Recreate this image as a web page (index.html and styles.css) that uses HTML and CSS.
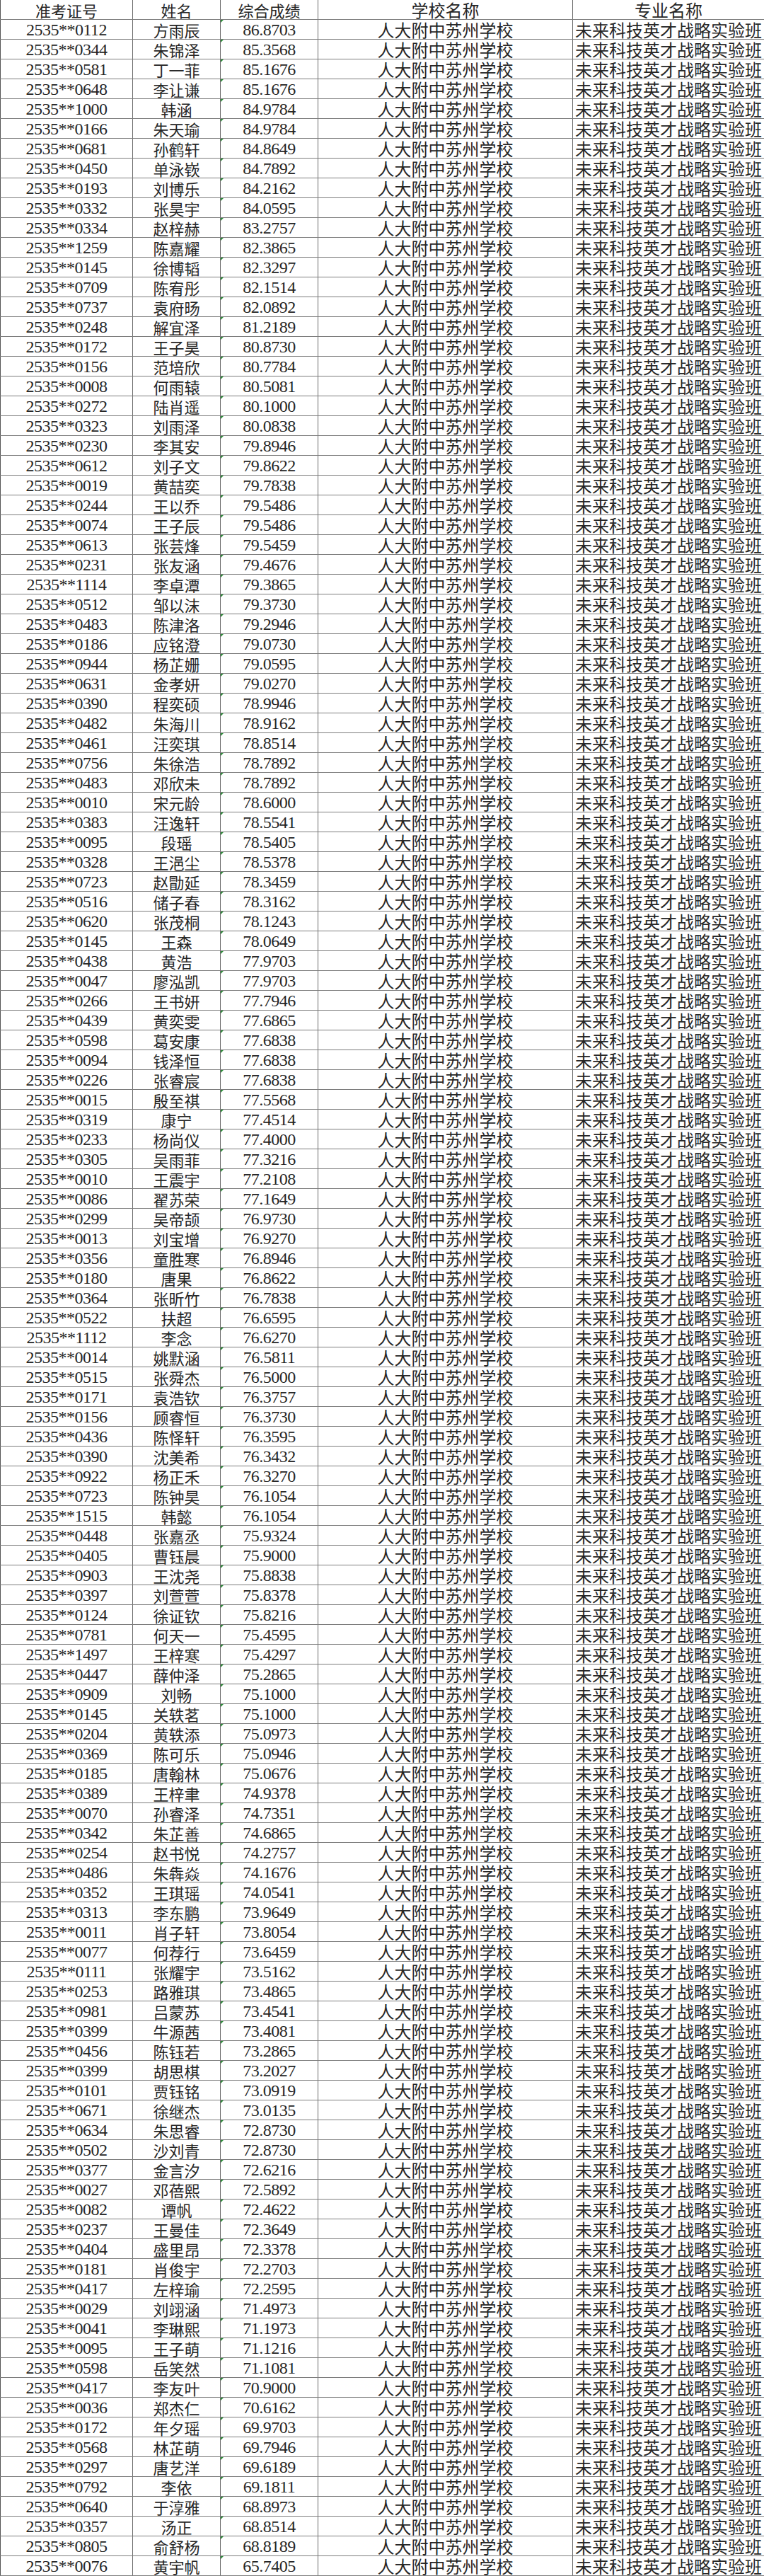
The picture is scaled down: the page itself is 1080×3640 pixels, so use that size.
FILE: index.html
```html
<!DOCTYPE html>
<html lang="zh-CN">
<head>
<meta charset="utf-8">
<title>录取名单</title>
<link rel="stylesheet" href="styles.css">
</head>
<body>
<div class="sheet">
<div class="row head"><span class="c t">准考证号</span><span class="c t">姓名</span><span class="c t">综合成绩</span><span class="c t">学校名称</span><span class="c t">专业名称</span></div>
<div class="row"><span class="c n">2535**0112</span><span class="c t">方雨辰</span><span class="c n s">86.8703</span><span class="c t">人大附中苏州学校</span><span class="c t">未来科技英才战略实验班</span></div>
<div class="row"><span class="c n">2535**0344</span><span class="c t">朱锦泽</span><span class="c n s">85.3568</span><span class="c t">人大附中苏州学校</span><span class="c t">未来科技英才战略实验班</span></div>
<div class="row"><span class="c n">2535**0581</span><span class="c t">丁一菲</span><span class="c n s">85.1676</span><span class="c t">人大附中苏州学校</span><span class="c t">未来科技英才战略实验班</span></div>
<div class="row"><span class="c n">2535**0648</span><span class="c t">李让谦</span><span class="c n s">85.1676</span><span class="c t">人大附中苏州学校</span><span class="c t">未来科技英才战略实验班</span></div>
<div class="row"><span class="c n">2535**1000</span><span class="c t">韩涵</span><span class="c n s">84.9784</span><span class="c t">人大附中苏州学校</span><span class="c t">未来科技英才战略实验班</span></div>
<div class="row"><span class="c n">2535**0166</span><span class="c t">朱天瑜</span><span class="c n s">84.9784</span><span class="c t">人大附中苏州学校</span><span class="c t">未来科技英才战略实验班</span></div>
<div class="row"><span class="c n">2535**0681</span><span class="c t">孙鹤轩</span><span class="c n s">84.8649</span><span class="c t">人大附中苏州学校</span><span class="c t">未来科技英才战略实验班</span></div>
<div class="row"><span class="c n">2535**0450</span><span class="c t">单泳嵚</span><span class="c n s">84.7892</span><span class="c t">人大附中苏州学校</span><span class="c t">未来科技英才战略实验班</span></div>
<div class="row"><span class="c n">2535**0193</span><span class="c t">刘博乐</span><span class="c n s">84.2162</span><span class="c t">人大附中苏州学校</span><span class="c t">未来科技英才战略实验班</span></div>
<div class="row"><span class="c n">2535**0332</span><span class="c t">张昊宇</span><span class="c n s">84.0595</span><span class="c t">人大附中苏州学校</span><span class="c t">未来科技英才战略实验班</span></div>
<div class="row"><span class="c n">2535**0334</span><span class="c t">赵梓赫</span><span class="c n s">83.2757</span><span class="c t">人大附中苏州学校</span><span class="c t">未来科技英才战略实验班</span></div>
<div class="row"><span class="c n">2535**1259</span><span class="c t">陈嘉耀</span><span class="c n s">82.3865</span><span class="c t">人大附中苏州学校</span><span class="c t">未来科技英才战略实验班</span></div>
<div class="row"><span class="c n">2535**0145</span><span class="c t">徐博韬</span><span class="c n s">82.3297</span><span class="c t">人大附中苏州学校</span><span class="c t">未来科技英才战略实验班</span></div>
<div class="row"><span class="c n">2535**0709</span><span class="c t">陈宥彤</span><span class="c n s">82.1514</span><span class="c t">人大附中苏州学校</span><span class="c t">未来科技英才战略实验班</span></div>
<div class="row"><span class="c n">2535**0737</span><span class="c t">袁府旸</span><span class="c n s">82.0892</span><span class="c t">人大附中苏州学校</span><span class="c t">未来科技英才战略实验班</span></div>
<div class="row"><span class="c n">2535**0248</span><span class="c t">解宜泽</span><span class="c n s">81.2189</span><span class="c t">人大附中苏州学校</span><span class="c t">未来科技英才战略实验班</span></div>
<div class="row"><span class="c n">2535**0172</span><span class="c t">王子昊</span><span class="c n s">80.8730</span><span class="c t">人大附中苏州学校</span><span class="c t">未来科技英才战略实验班</span></div>
<div class="row"><span class="c n">2535**0156</span><span class="c t">范培欣</span><span class="c n s">80.7784</span><span class="c t">人大附中苏州学校</span><span class="c t">未来科技英才战略实验班</span></div>
<div class="row"><span class="c n">2535**0008</span><span class="c t">何雨辕</span><span class="c n s">80.5081</span><span class="c t">人大附中苏州学校</span><span class="c t">未来科技英才战略实验班</span></div>
<div class="row"><span class="c n">2535**0272</span><span class="c t">陆肖遥</span><span class="c n s">80.1000</span><span class="c t">人大附中苏州学校</span><span class="c t">未来科技英才战略实验班</span></div>
<div class="row"><span class="c n">2535**0323</span><span class="c t">刘雨泽</span><span class="c n s">80.0838</span><span class="c t">人大附中苏州学校</span><span class="c t">未来科技英才战略实验班</span></div>
<div class="row"><span class="c n">2535**0230</span><span class="c t">李其安</span><span class="c n s">79.8946</span><span class="c t">人大附中苏州学校</span><span class="c t">未来科技英才战略实验班</span></div>
<div class="row"><span class="c n">2535**0612</span><span class="c t">刘子文</span><span class="c n s">79.8622</span><span class="c t">人大附中苏州学校</span><span class="c t">未来科技英才战略实验班</span></div>
<div class="row"><span class="c n">2535**0019</span><span class="c t">黄喆奕</span><span class="c n s">79.7838</span><span class="c t">人大附中苏州学校</span><span class="c t">未来科技英才战略实验班</span></div>
<div class="row"><span class="c n">2535**0244</span><span class="c t">王以乔</span><span class="c n s">79.5486</span><span class="c t">人大附中苏州学校</span><span class="c t">未来科技英才战略实验班</span></div>
<div class="row"><span class="c n">2535**0074</span><span class="c t">王子辰</span><span class="c n s">79.5486</span><span class="c t">人大附中苏州学校</span><span class="c t">未来科技英才战略实验班</span></div>
<div class="row"><span class="c n">2535**0613</span><span class="c t">张芸烽</span><span class="c n s">79.5459</span><span class="c t">人大附中苏州学校</span><span class="c t">未来科技英才战略实验班</span></div>
<div class="row"><span class="c n">2535**0231</span><span class="c t">张友涵</span><span class="c n s">79.4676</span><span class="c t">人大附中苏州学校</span><span class="c t">未来科技英才战略实验班</span></div>
<div class="row"><span class="c n">2535**1114</span><span class="c t">李卓潭</span><span class="c n s">79.3865</span><span class="c t">人大附中苏州学校</span><span class="c t">未来科技英才战略实验班</span></div>
<div class="row"><span class="c n">2535**0512</span><span class="c t">邹以沫</span><span class="c n s">79.3730</span><span class="c t">人大附中苏州学校</span><span class="c t">未来科技英才战略实验班</span></div>
<div class="row"><span class="c n">2535**0483</span><span class="c t">陈津洛</span><span class="c n s">79.2946</span><span class="c t">人大附中苏州学校</span><span class="c t">未来科技英才战略实验班</span></div>
<div class="row"><span class="c n">2535**0186</span><span class="c t">应铭澄</span><span class="c n s">79.0730</span><span class="c t">人大附中苏州学校</span><span class="c t">未来科技英才战略实验班</span></div>
<div class="row"><span class="c n">2535**0944</span><span class="c t">杨芷姗</span><span class="c n s">79.0595</span><span class="c t">人大附中苏州学校</span><span class="c t">未来科技英才战略实验班</span></div>
<div class="row"><span class="c n">2535**0631</span><span class="c t">金孝妍</span><span class="c n s">79.0270</span><span class="c t">人大附中苏州学校</span><span class="c t">未来科技英才战略实验班</span></div>
<div class="row"><span class="c n">2535**0390</span><span class="c t">程奕硕</span><span class="c n s">78.9946</span><span class="c t">人大附中苏州学校</span><span class="c t">未来科技英才战略实验班</span></div>
<div class="row"><span class="c n">2535**0482</span><span class="c t">朱海川</span><span class="c n s">78.9162</span><span class="c t">人大附中苏州学校</span><span class="c t">未来科技英才战略实验班</span></div>
<div class="row"><span class="c n">2535**0461</span><span class="c t">汪奕琪</span><span class="c n s">78.8514</span><span class="c t">人大附中苏州学校</span><span class="c t">未来科技英才战略实验班</span></div>
<div class="row"><span class="c n">2535**0756</span><span class="c t">朱徐浩</span><span class="c n s">78.7892</span><span class="c t">人大附中苏州学校</span><span class="c t">未来科技英才战略实验班</span></div>
<div class="row"><span class="c n">2535**0483</span><span class="c t">邓欣未</span><span class="c n s">78.7892</span><span class="c t">人大附中苏州学校</span><span class="c t">未来科技英才战略实验班</span></div>
<div class="row"><span class="c n">2535**0010</span><span class="c t">宋元龄</span><span class="c n s">78.6000</span><span class="c t">人大附中苏州学校</span><span class="c t">未来科技英才战略实验班</span></div>
<div class="row"><span class="c n">2535**0383</span><span class="c t">汪逸轩</span><span class="c n s">78.5541</span><span class="c t">人大附中苏州学校</span><span class="c t">未来科技英才战略实验班</span></div>
<div class="row"><span class="c n">2535**0095</span><span class="c t">段瑶</span><span class="c n s">78.5405</span><span class="c t">人大附中苏州学校</span><span class="c t">未来科技英才战略实验班</span></div>
<div class="row"><span class="c n">2535**0328</span><span class="c t">王浥尘</span><span class="c n s">78.5378</span><span class="c t">人大附中苏州学校</span><span class="c t">未来科技英才战略实验班</span></div>
<div class="row"><span class="c n">2535**0723</span><span class="c t">赵勖延</span><span class="c n s">78.3459</span><span class="c t">人大附中苏州学校</span><span class="c t">未来科技英才战略实验班</span></div>
<div class="row"><span class="c n">2535**0516</span><span class="c t">储子春</span><span class="c n s">78.3162</span><span class="c t">人大附中苏州学校</span><span class="c t">未来科技英才战略实验班</span></div>
<div class="row"><span class="c n">2535**0620</span><span class="c t">张茂桐</span><span class="c n s">78.1243</span><span class="c t">人大附中苏州学校</span><span class="c t">未来科技英才战略实验班</span></div>
<div class="row"><span class="c n">2535**0145</span><span class="c t">王森</span><span class="c n s">78.0649</span><span class="c t">人大附中苏州学校</span><span class="c t">未来科技英才战略实验班</span></div>
<div class="row"><span class="c n">2535**0438</span><span class="c t">黄浩</span><span class="c n s">77.9703</span><span class="c t">人大附中苏州学校</span><span class="c t">未来科技英才战略实验班</span></div>
<div class="row"><span class="c n">2535**0047</span><span class="c t">廖泓凯</span><span class="c n s">77.9703</span><span class="c t">人大附中苏州学校</span><span class="c t">未来科技英才战略实验班</span></div>
<div class="row"><span class="c n">2535**0266</span><span class="c t">王书妍</span><span class="c n s">77.7946</span><span class="c t">人大附中苏州学校</span><span class="c t">未来科技英才战略实验班</span></div>
<div class="row"><span class="c n">2535**0439</span><span class="c t">黄奕雯</span><span class="c n s">77.6865</span><span class="c t">人大附中苏州学校</span><span class="c t">未来科技英才战略实验班</span></div>
<div class="row"><span class="c n">2535**0598</span><span class="c t">葛安康</span><span class="c n s">77.6838</span><span class="c t">人大附中苏州学校</span><span class="c t">未来科技英才战略实验班</span></div>
<div class="row"><span class="c n">2535**0094</span><span class="c t">钱泽恒</span><span class="c n s">77.6838</span><span class="c t">人大附中苏州学校</span><span class="c t">未来科技英才战略实验班</span></div>
<div class="row"><span class="c n">2535**0226</span><span class="c t">张睿宸</span><span class="c n s">77.6838</span><span class="c t">人大附中苏州学校</span><span class="c t">未来科技英才战略实验班</span></div>
<div class="row"><span class="c n">2535**0015</span><span class="c t">殷至祺</span><span class="c n s">77.5568</span><span class="c t">人大附中苏州学校</span><span class="c t">未来科技英才战略实验班</span></div>
<div class="row"><span class="c n">2535**0319</span><span class="c t">康宁</span><span class="c n s">77.4514</span><span class="c t">人大附中苏州学校</span><span class="c t">未来科技英才战略实验班</span></div>
<div class="row"><span class="c n">2535**0233</span><span class="c t">杨尚仪</span><span class="c n s">77.4000</span><span class="c t">人大附中苏州学校</span><span class="c t">未来科技英才战略实验班</span></div>
<div class="row"><span class="c n">2535**0305</span><span class="c t">吴雨菲</span><span class="c n s">77.3216</span><span class="c t">人大附中苏州学校</span><span class="c t">未来科技英才战略实验班</span></div>
<div class="row"><span class="c n">2535**0010</span><span class="c t">王震宇</span><span class="c n s">77.2108</span><span class="c t">人大附中苏州学校</span><span class="c t">未来科技英才战略实验班</span></div>
<div class="row"><span class="c n">2535**0086</span><span class="c t">翟苏荣</span><span class="c n s">77.1649</span><span class="c t">人大附中苏州学校</span><span class="c t">未来科技英才战略实验班</span></div>
<div class="row"><span class="c n">2535**0299</span><span class="c t">吴帝颉</span><span class="c n s">76.9730</span><span class="c t">人大附中苏州学校</span><span class="c t">未来科技英才战略实验班</span></div>
<div class="row"><span class="c n">2535**0013</span><span class="c t">刘宝增</span><span class="c n s">76.9270</span><span class="c t">人大附中苏州学校</span><span class="c t">未来科技英才战略实验班</span></div>
<div class="row"><span class="c n">2535**0356</span><span class="c t">童胜寒</span><span class="c n s">76.8946</span><span class="c t">人大附中苏州学校</span><span class="c t">未来科技英才战略实验班</span></div>
<div class="row"><span class="c n">2535**0180</span><span class="c t">唐果</span><span class="c n s">76.8622</span><span class="c t">人大附中苏州学校</span><span class="c t">未来科技英才战略实验班</span></div>
<div class="row"><span class="c n">2535**0364</span><span class="c t">张昕竹</span><span class="c n s">76.7838</span><span class="c t">人大附中苏州学校</span><span class="c t">未来科技英才战略实验班</span></div>
<div class="row"><span class="c n">2535**0522</span><span class="c t">扶超</span><span class="c n s">76.6595</span><span class="c t">人大附中苏州学校</span><span class="c t">未来科技英才战略实验班</span></div>
<div class="row"><span class="c n">2535**1112</span><span class="c t">李念</span><span class="c n s">76.6270</span><span class="c t">人大附中苏州学校</span><span class="c t">未来科技英才战略实验班</span></div>
<div class="row"><span class="c n">2535**0014</span><span class="c t">姚默涵</span><span class="c n s">76.5811</span><span class="c t">人大附中苏州学校</span><span class="c t">未来科技英才战略实验班</span></div>
<div class="row"><span class="c n">2535**0515</span><span class="c t">张舜杰</span><span class="c n s">76.5000</span><span class="c t">人大附中苏州学校</span><span class="c t">未来科技英才战略实验班</span></div>
<div class="row"><span class="c n">2535**0171</span><span class="c t">袁浩钦</span><span class="c n s">76.3757</span><span class="c t">人大附中苏州学校</span><span class="c t">未来科技英才战略实验班</span></div>
<div class="row"><span class="c n">2535**0156</span><span class="c t">顾睿恒</span><span class="c n s">76.3730</span><span class="c t">人大附中苏州学校</span><span class="c t">未来科技英才战略实验班</span></div>
<div class="row"><span class="c n">2535**0436</span><span class="c t">陈怿轩</span><span class="c n s">76.3595</span><span class="c t">人大附中苏州学校</span><span class="c t">未来科技英才战略实验班</span></div>
<div class="row"><span class="c n">2535**0390</span><span class="c t">沈美希</span><span class="c n s">76.3432</span><span class="c t">人大附中苏州学校</span><span class="c t">未来科技英才战略实验班</span></div>
<div class="row"><span class="c n">2535**0922</span><span class="c t">杨正禾</span><span class="c n s">76.3270</span><span class="c t">人大附中苏州学校</span><span class="c t">未来科技英才战略实验班</span></div>
<div class="row"><span class="c n">2535**0723</span><span class="c t">陈钟昊</span><span class="c n s">76.1054</span><span class="c t">人大附中苏州学校</span><span class="c t">未来科技英才战略实验班</span></div>
<div class="row"><span class="c n">2535**1515</span><span class="c t">韩懿</span><span class="c n s">76.1054</span><span class="c t">人大附中苏州学校</span><span class="c t">未来科技英才战略实验班</span></div>
<div class="row"><span class="c n">2535**0448</span><span class="c t">张嘉丞</span><span class="c n s">75.9324</span><span class="c t">人大附中苏州学校</span><span class="c t">未来科技英才战略实验班</span></div>
<div class="row"><span class="c n">2535**0405</span><span class="c t">曹钰晨</span><span class="c n s">75.9000</span><span class="c t">人大附中苏州学校</span><span class="c t">未来科技英才战略实验班</span></div>
<div class="row"><span class="c n">2535**0903</span><span class="c t">王沈尧</span><span class="c n s">75.8838</span><span class="c t">人大附中苏州学校</span><span class="c t">未来科技英才战略实验班</span></div>
<div class="row"><span class="c n">2535**0397</span><span class="c t">刘萱萱</span><span class="c n s">75.8378</span><span class="c t">人大附中苏州学校</span><span class="c t">未来科技英才战略实验班</span></div>
<div class="row"><span class="c n">2535**0124</span><span class="c t">徐证钦</span><span class="c n s">75.8216</span><span class="c t">人大附中苏州学校</span><span class="c t">未来科技英才战略实验班</span></div>
<div class="row"><span class="c n">2535**0781</span><span class="c t">何天一</span><span class="c n s">75.4595</span><span class="c t">人大附中苏州学校</span><span class="c t">未来科技英才战略实验班</span></div>
<div class="row"><span class="c n">2535**1497</span><span class="c t">王梓寒</span><span class="c n s">75.4297</span><span class="c t">人大附中苏州学校</span><span class="c t">未来科技英才战略实验班</span></div>
<div class="row"><span class="c n">2535**0447</span><span class="c t">薛仲泽</span><span class="c n s">75.2865</span><span class="c t">人大附中苏州学校</span><span class="c t">未来科技英才战略实验班</span></div>
<div class="row"><span class="c n">2535**0909</span><span class="c t">刘畅</span><span class="c n s">75.1000</span><span class="c t">人大附中苏州学校</span><span class="c t">未来科技英才战略实验班</span></div>
<div class="row"><span class="c n">2535**0145</span><span class="c t">关轶茗</span><span class="c n s">75.1000</span><span class="c t">人大附中苏州学校</span><span class="c t">未来科技英才战略实验班</span></div>
<div class="row"><span class="c n">2535**0204</span><span class="c t">黄轶添</span><span class="c n s">75.0973</span><span class="c t">人大附中苏州学校</span><span class="c t">未来科技英才战略实验班</span></div>
<div class="row"><span class="c n">2535**0369</span><span class="c t">陈可乐</span><span class="c n s">75.0946</span><span class="c t">人大附中苏州学校</span><span class="c t">未来科技英才战略实验班</span></div>
<div class="row"><span class="c n">2535**0185</span><span class="c t">唐翰林</span><span class="c n s">75.0676</span><span class="c t">人大附中苏州学校</span><span class="c t">未来科技英才战略实验班</span></div>
<div class="row"><span class="c n">2535**0389</span><span class="c t">王梓聿</span><span class="c n s">74.9378</span><span class="c t">人大附中苏州学校</span><span class="c t">未来科技英才战略实验班</span></div>
<div class="row"><span class="c n">2535**0070</span><span class="c t">孙睿泽</span><span class="c n s">74.7351</span><span class="c t">人大附中苏州学校</span><span class="c t">未来科技英才战略实验班</span></div>
<div class="row"><span class="c n">2535**0342</span><span class="c t">朱芷善</span><span class="c n s">74.6865</span><span class="c t">人大附中苏州学校</span><span class="c t">未来科技英才战略实验班</span></div>
<div class="row"><span class="c n">2535**0254</span><span class="c t">赵书悦</span><span class="c n s">74.2757</span><span class="c t">人大附中苏州学校</span><span class="c t">未来科技英才战略实验班</span></div>
<div class="row"><span class="c n">2535**0486</span><span class="c t">朱犇焱</span><span class="c n s">74.1676</span><span class="c t">人大附中苏州学校</span><span class="c t">未来科技英才战略实验班</span></div>
<div class="row"><span class="c n">2535**0352</span><span class="c t">王琪瑶</span><span class="c n s">74.0541</span><span class="c t">人大附中苏州学校</span><span class="c t">未来科技英才战略实验班</span></div>
<div class="row"><span class="c n">2535**0313</span><span class="c t">李东鹏</span><span class="c n s">73.9649</span><span class="c t">人大附中苏州学校</span><span class="c t">未来科技英才战略实验班</span></div>
<div class="row"><span class="c n">2535**0011</span><span class="c t">肖子轩</span><span class="c n s">73.8054</span><span class="c t">人大附中苏州学校</span><span class="c t">未来科技英才战略实验班</span></div>
<div class="row"><span class="c n">2535**0077</span><span class="c t">何荐行</span><span class="c n s">73.6459</span><span class="c t">人大附中苏州学校</span><span class="c t">未来科技英才战略实验班</span></div>
<div class="row"><span class="c n">2535**0111</span><span class="c t">张耀宇</span><span class="c n s">73.5162</span><span class="c t">人大附中苏州学校</span><span class="c t">未来科技英才战略实验班</span></div>
<div class="row"><span class="c n">2535**0253</span><span class="c t">路雅琪</span><span class="c n s">73.4865</span><span class="c t">人大附中苏州学校</span><span class="c t">未来科技英才战略实验班</span></div>
<div class="row"><span class="c n">2535**0981</span><span class="c t">吕蒙苏</span><span class="c n s">73.4541</span><span class="c t">人大附中苏州学校</span><span class="c t">未来科技英才战略实验班</span></div>
<div class="row"><span class="c n">2535**0399</span><span class="c t">牛源茜</span><span class="c n s">73.4081</span><span class="c t">人大附中苏州学校</span><span class="c t">未来科技英才战略实验班</span></div>
<div class="row"><span class="c n">2535**0456</span><span class="c t">陈钰若</span><span class="c n s">73.2865</span><span class="c t">人大附中苏州学校</span><span class="c t">未来科技英才战略实验班</span></div>
<div class="row"><span class="c n">2535**0399</span><span class="c t">胡思棋</span><span class="c n s">73.2027</span><span class="c t">人大附中苏州学校</span><span class="c t">未来科技英才战略实验班</span></div>
<div class="row"><span class="c n">2535**0101</span><span class="c t">贾钰铭</span><span class="c n s">73.0919</span><span class="c t">人大附中苏州学校</span><span class="c t">未来科技英才战略实验班</span></div>
<div class="row"><span class="c n">2535**0671</span><span class="c t">徐继杰</span><span class="c n s">73.0135</span><span class="c t">人大附中苏州学校</span><span class="c t">未来科技英才战略实验班</span></div>
<div class="row"><span class="c n">2535**0634</span><span class="c t">朱思睿</span><span class="c n s">72.8730</span><span class="c t">人大附中苏州学校</span><span class="c t">未来科技英才战略实验班</span></div>
<div class="row"><span class="c n">2535**0502</span><span class="c t">沙刘青</span><span class="c n s">72.8730</span><span class="c t">人大附中苏州学校</span><span class="c t">未来科技英才战略实验班</span></div>
<div class="row"><span class="c n">2535**0377</span><span class="c t">金言汐</span><span class="c n s">72.6216</span><span class="c t">人大附中苏州学校</span><span class="c t">未来科技英才战略实验班</span></div>
<div class="row"><span class="c n">2535**0027</span><span class="c t">邓蓓熙</span><span class="c n s">72.5892</span><span class="c t">人大附中苏州学校</span><span class="c t">未来科技英才战略实验班</span></div>
<div class="row"><span class="c n">2535**0082</span><span class="c t">谭帆</span><span class="c n s">72.4622</span><span class="c t">人大附中苏州学校</span><span class="c t">未来科技英才战略实验班</span></div>
<div class="row"><span class="c n">2535**0237</span><span class="c t">王曼佳</span><span class="c n s">72.3649</span><span class="c t">人大附中苏州学校</span><span class="c t">未来科技英才战略实验班</span></div>
<div class="row"><span class="c n">2535**0404</span><span class="c t">盛里昂</span><span class="c n s">72.3378</span><span class="c t">人大附中苏州学校</span><span class="c t">未来科技英才战略实验班</span></div>
<div class="row"><span class="c n">2535**0181</span><span class="c t">肖俊宇</span><span class="c n s">72.2703</span><span class="c t">人大附中苏州学校</span><span class="c t">未来科技英才战略实验班</span></div>
<div class="row"><span class="c n">2535**0417</span><span class="c t">左梓瑜</span><span class="c n s">72.2595</span><span class="c t">人大附中苏州学校</span><span class="c t">未来科技英才战略实验班</span></div>
<div class="row"><span class="c n">2535**0029</span><span class="c t">刘翊涵</span><span class="c n s">71.4973</span><span class="c t">人大附中苏州学校</span><span class="c t">未来科技英才战略实验班</span></div>
<div class="row"><span class="c n">2535**0041</span><span class="c t">李琳熙</span><span class="c n s">71.1973</span><span class="c t">人大附中苏州学校</span><span class="c t">未来科技英才战略实验班</span></div>
<div class="row"><span class="c n">2535**0095</span><span class="c t">王子萌</span><span class="c n s">71.1216</span><span class="c t">人大附中苏州学校</span><span class="c t">未来科技英才战略实验班</span></div>
<div class="row"><span class="c n">2535**0598</span><span class="c t">岳笑然</span><span class="c n s">71.1081</span><span class="c t">人大附中苏州学校</span><span class="c t">未来科技英才战略实验班</span></div>
<div class="row"><span class="c n">2535**0417</span><span class="c t">李友叶</span><span class="c n s">70.9000</span><span class="c t">人大附中苏州学校</span><span class="c t">未来科技英才战略实验班</span></div>
<div class="row"><span class="c n">2535**0036</span><span class="c t">郑杰仁</span><span class="c n s">70.6162</span><span class="c t">人大附中苏州学校</span><span class="c t">未来科技英才战略实验班</span></div>
<div class="row"><span class="c n">2535**0172</span><span class="c t">年夕瑶</span><span class="c n s">69.9703</span><span class="c t">人大附中苏州学校</span><span class="c t">未来科技英才战略实验班</span></div>
<div class="row"><span class="c n">2535**0568</span><span class="c t">林芷萌</span><span class="c n s">69.7946</span><span class="c t">人大附中苏州学校</span><span class="c t">未来科技英才战略实验班</span></div>
<div class="row"><span class="c n">2535**0297</span><span class="c t">唐艺洋</span><span class="c n s">69.6189</span><span class="c t">人大附中苏州学校</span><span class="c t">未来科技英才战略实验班</span></div>
<div class="row"><span class="c n">2535**0792</span><span class="c t">李依</span><span class="c n s">69.1811</span><span class="c t">人大附中苏州学校</span><span class="c t">未来科技英才战略实验班</span></div>
<div class="row"><span class="c n">2535**0640</span><span class="c t">于淳雅</span><span class="c n s">68.8973</span><span class="c t">人大附中苏州学校</span><span class="c t">未来科技英才战略实验班</span></div>
<div class="row"><span class="c n">2535**0357</span><span class="c t">汤正</span><span class="c n s">68.8514</span><span class="c t">人大附中苏州学校</span><span class="c t">未来科技英才战略实验班</span></div>
<div class="row"><span class="c n">2535**0805</span><span class="c t">俞舒杨</span><span class="c n s">68.8189</span><span class="c t">人大附中苏州学校</span><span class="c t">未来科技英才战略实验班</span></div>
<div class="row"><span class="c n">2535**0076</span><span class="c t">黄宇帆</span><span class="c n s">65.7405</span><span class="c t">人大附中苏州学校</span><span class="c t">未来科技英才战略实验班</span></div>
</div>
</body>
</html>
```
FILE: styles.css
```css
html, body {
  margin: 0;
  padding: 0;
  background: #ffffff;
}

.sheet {
  width: 1080px;
  color: #262626;
}

.row {
  display: grid;
  grid-template-columns: 188px 124px 138px 360px 270px;
  height: 28px;
  box-sizing: border-box;
  border-bottom: 1px solid #7d7d7d;
}

.c {
  display: flex;
  align-items: center;
  justify-content: center;
  white-space: nowrap;
  box-sizing: border-box;
  border-right: 1px solid #6a6a6a;
  padding-top: 1px;
  line-height: 1;
  position: relative;
}

.c:first-child {
  border-left: 1px solid #555555;
}

.c:last-child {
  border-right: none;
}

.t {
  font-family: "Noto Sans CJK SC", "Noto Sans CJK TC", sans-serif;
  font-size: 22px;
  font-weight: 400;
}

.row .c:nth-child(n+4) {
  font-size: 24px;
}

.n {
  font-family: "Liberation Serif", "DejaVu Serif", serif;
  font-size: 24px;
  letter-spacing: -0.5px;
}

.s::before {
  content: "";
  position: absolute;
  left: 0;
  top: 0;
  width: 0;
  height: 0;
  border-top: 4px solid #2e8b3a;
  border-right: 4px solid transparent;
}
```
